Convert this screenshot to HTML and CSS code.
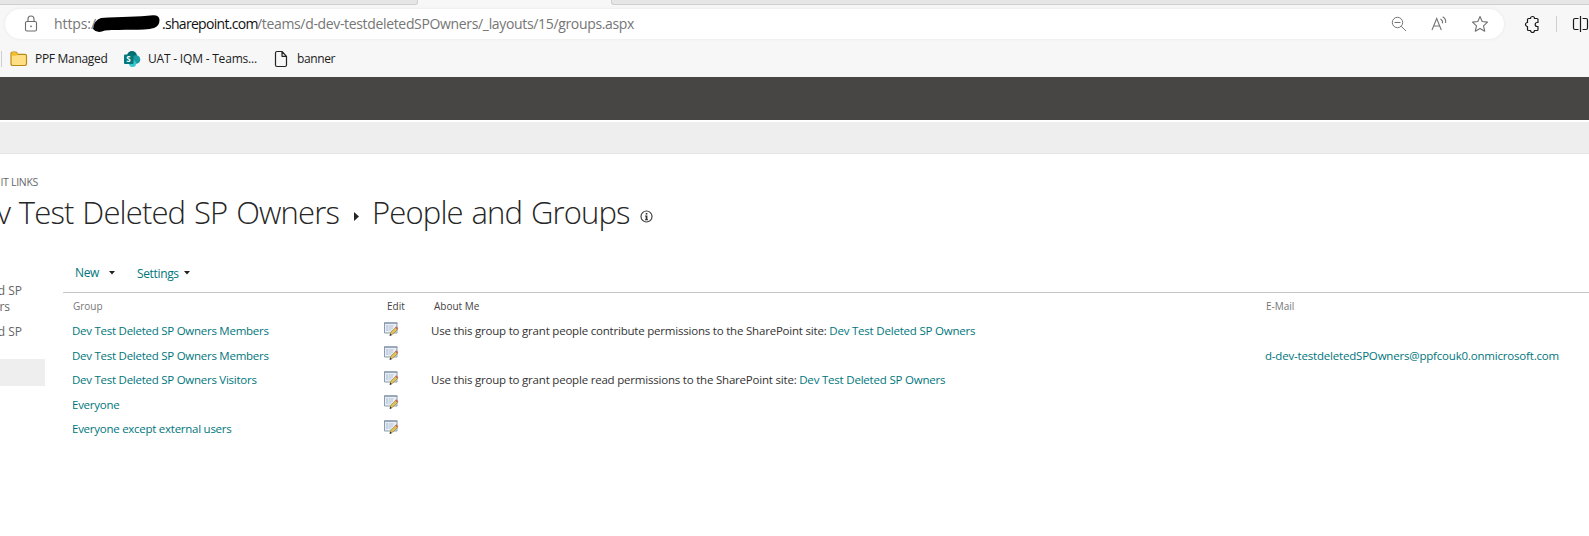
FILE: index.html
```html
<!DOCTYPE html>
<html lang="en">
<head>
<meta charset="utf-8">
<title>People and Groups</title>
<link rel="stylesheet" href="styles.css">
</head>
<body>
<svg class="defs" aria-hidden="true">
  <symbol id="edit" viewBox="0 0 16 15">
    <path d="M.5 1h12.500v10H.5z" fill="#e9eef6" stroke="#8b9bb0" stroke-width="1"/>
    <path d="M0 1h13.500" stroke="#8292a8" stroke-width="1.200"/>
    <path d="M2.500 4h1M2.500 6h1M2.500 8h1" stroke="#5f7ba8"/>
    <path d="M4.500 4h5M4.500 6h4.500M4.500 8h3" stroke="#b4c1d4"/>
    <path d="M6 13l1-3 4.500-4.500 2 2L9 12z" fill="#e0c352" stroke="#8d7a3a" stroke-width=".6"/>
    <path d="M11 5.500l1.400-1.200 1.900 1.900-1.300 1.300z" fill="#c9685a"/>
    <path d="M5.500 14l.8-2.200 1.600 1.500z" fill="#222"/>
  </symbol>
</svg>
<header class="browser">
  <div class="tabs"><div class="tab-left"></div><div class="tab-active"></div><div class="tab-right"></div></div>
  <div class="toolbar">
    <div class="address">
      <svg class="lock" width="14" height="18" viewBox="0 0 14 18" fill="none" stroke="#6b6b6b" stroke-width="1.100"><rect x="1.500" y="6.500" width="11" height="9.500" rx="1.500"/><path d="M4 6.500V4a3 3 0 0 1 6 0v2.500"/><circle cx="7" cy="11.300" r=".9" fill="#6b6b6b" stroke="none"/></svg>
      <span class="url scheme">https:/</span>
      <svg class="redaction" width="68" height="20" viewBox="0 0 68 20"><path d="M0 15Q1 6 8 4C28 2.500 45 3 60 1.200Q66.500 1 66.500 6Q66.500 12 61 14C50 17 30 15 12 16.500Q4 20 0 15z"/></svg>
      <span class="url domain">.sharepoint.com</span><span class="url path">/teams/d-dev-testdeletedSPOwners/_layouts/15/groups.aspx</span>
      <div class="address-actions">
        <svg width="16" height="16" viewBox="0 0 16 16" fill="none" stroke="#757575"><circle cx="6.500" cy="6.500" r="5.200"/><path d="M3.500 6.500h6M10.200 10.200l4.800 4.800"/></svg>
        <svg width="16" height="16" viewBox="0 0 16 16" fill="none" stroke="#757575" stroke-width="1.100"><path d="M1 14L5.700 2.500 10.300 14M2.600 10h6.200M9.500 3a4 4 0 0 1 2 4.300M11.700.8A6 6 0 0 1 14.600 7"/></svg>
        <svg width="18" height="18" viewBox="0 0 18 18" fill="none" stroke="#707070" stroke-width="1.100" stroke-linejoin="round"><path d="M9 1.500l2.200 5 5.300.6-4 3.700 1.200 5.400L9 13.600l-4.700 2.600 1.200-5.400-4-3.700 5.300-.6z"/></svg>
      </div>
    </div>
    <div class="extras">
      <svg width="16" height="18" viewBox="0 0 16 18" fill="none" stroke="#1a1a1a" stroke-width="1.200" stroke-linejoin="round"><path d="M4.500 3.500H6.500a2 2 0 0 1 4 0h2.500q1 0 1 1V7.500h-.8a1.800 1.800 0 0 0 0 4h.8v3q0 1-1 1h-2.500a2 2 0 0 1-4 0H4.500q-1 0-1-1v-3a2 2 0 0 1 0-4v-3q0-1 1-1z"/></svg>
      <i class="divider"></i>
      <svg width="18" height="18" viewBox="0 0 18 18" fill="none" stroke="#1a1a1a" stroke-width="1.200"><path d="M6.500 3.500H3q-1.500 0-1.500 1.500v8q0 1.500 1.500 1.500h3.500M10.500 3.500H14q1.500 0 1.500 1.500v8q0 1.500-1.500 1.500h-3.500M8.500 1v16"/></svg>
    </div>
  </div>
  <nav class="bookmarks">
    <i class="divider"></i>
    <svg class="folder" width="18" height="16" viewBox="0 0 18 16"><path d="M1 3q0-2 2-2h3l2 2.300h7q1.500 0 1.500 1.500v8q0 1.700-1.700 1.700H2.700Q1 14.500 1 12.800z" fill="#ffdf83" stroke="#b98a18" stroke-width="1.200"/><path d="M1.600 4.800h4.600L8 3.300 6 1.600H3Q1.600 1.600 1.600 3z" fill="#f4bd2c"/></svg>
    <span class="mark managed">PPF Managed</span>
    <svg class="sp" width="17" height="16" viewBox="0 0 17 16"><circle cx="8" cy="5" r="5" fill="#036c70"/><circle cx="12" cy="8.500" r="4.300" fill="#1a9ba1"/><circle cx="8.500" cy="12.500" r="3.500" fill="#37c6d0"/><rect y="3.500" width="9.500" height="9.500" rx="1" fill="#03787c"/><text class="sp-letter" x="2.300" y="11.300">S</text></svg>
    <span class="mark teams">UAT - IQM - Teams...</span>
    <svg class="page-icon" width="14" height="18" viewBox="0 0 14 18" fill="none" stroke="#222" stroke-width="1.200" stroke-linejoin="round"><path d="M1.500 3q0-1.500 1.500-1.500h5l4.500 4.800V15q0 1.500-1.500 1.500H3q-1.500 0-1.500-1.500zM8 1.500v4.800h4.500"/></svg>
    <span class="mark banner">banner</span>
  </nav>
</header>
<div class="suite"></div>
<div class="ribbon"></div>
<main class="page">
  <div class="edit-links"><span>IT LINKS</span></div>
  <h1 class="title"><span class="site">v Test Deleted SP Owners</span><svg class="crumb" width="5" height="9" viewBox="0 0 5 9"><path d="M0 0l5 4.500L0 9z" fill="#262626"/></svg><span class="section">People and Groups</span><svg class="info" width="13" height="13" viewBox="0 0 13 13"><circle cx="6.500" cy="6.500" r="5.500" fill="none" stroke="#444" stroke-width="1.200"/><path d="M5.700 3h1.700v1.500H5.700zM5 5.500h2.400v3.800H8v.9H5v-.9h.7V6.400H5z" fill="#333"/></svg></h1>
  <div class="columns">
    <aside class="side">
      <div class="side-a"><span>d SP</span></div>
      <div class="side-b"><span>rs</span></div>
      <div class="side-c"><span>d SP</span></div>
      <div class="selected"></div>
    </aside>
    <section class="list">
      <div class="menu"><a class="new">New</a><svg class="caret" width="6" height="4" viewBox="0 0 6 4"><path d="M0 0h6L3 3.500z" fill="#222"/></svg><a class="settings">Settings</a><svg class="caret2" width="6" height="4" viewBox="0 0 6 4"><path d="M0 0h6L3 3.500z" fill="#222"/></svg></div>
      <div class="row head"><span class="group">Group</span><span class="edit">Edit</span><span class="about">About Me</span><span class="mail">E-Mail</span></div>
      <div class="row"><a>Dev Test Deleted SP Owners Members</a><svg class="edit-icon"><use href="#edit"/></svg><p>Use this group to grant people contribute permissions to the SharePoint site: <a>Dev Test Deleted SP Owners</a></p></div>
      <div class="row"><a>Dev Test Deleted SP Owners Members</a><svg class="edit-icon"><use href="#edit"/></svg><p></p><a class="address-mail">d-dev-testdeletedSPOwners@ppfcouk0.onmicrosoft.com</a></div>
      <div class="row"><a>Dev Test Deleted SP Owners Visitors</a><svg class="edit-icon"><use href="#edit"/></svg><p>Use this group to grant people read permissions to the SharePoint site: <a>Dev Test Deleted SP Owners</a></p></div>
      <div class="row"><a>Everyone</a><svg class="edit-icon"><use href="#edit"/></svg></div>
      <div class="row"><a>Everyone except external users</a><svg class="edit-icon"><use href="#edit"/></svg></div>
    </section>
  </div>
</main>
</body>
</html>
```
FILE: styles.css
```css
* { box-sizing: border-box; }
body { margin: 0; height: 536px; overflow: hidden; background: #fff; color: #444; font: 12px/16px "Open Sans", "Noto Sans", sans-serif; }
svg { display: block; flex: none; }
.defs { position: absolute; width: 0; height: 0; }
span, a, p { white-space: nowrap; }
.browser { height: 77px; background: #f7f7f7; }
.tabs { display: flex; height: 5px; }
.tab-left, .tab-right { background: #e6e6e6; border-bottom: 1px solid #cfcfcf; }
.tab-left { width: 418px; border-right: 1px solid #cfcfcf; border-radius: 0 0 3px 0; }
.tab-active { width: 193px; }
.tab-right { flex: 1; border-left: 1px solid #cfcfcf; border-radius: 0 0 0 3px; }
.toolbar { display: flex; height: 38px; padding: 4px 0 4px 5px; overflow: hidden; }
.address { display: flex; flex: none; align-items: center; width: 1499px; height: 30px; padding-left: 19px; border-radius: 15px; background: #fff; box-shadow: 0 0 3px #e4e4e4; }
.url { font-size: 14px; line-height: 20px; color: #767676; }
.scheme { width: 39px; margin-left: 16px; letter-spacing: -.1px; }
.redaction { margin-right: 1px; }
.domain { color: #111; width: 95px; letter-spacing: -.7px; }
.path { letter-spacing: -.34px; }
.address-actions { display: flex; align-items: center; gap: 24px; margin-left: auto; padding-right: 15px; }
.extras { display: flex; flex: none; align-items: center; margin-left: 20px; }
.divider { width: 1px; height: 16px; background: #cfcfcf; flex: none; }
.extras .divider { margin: 0 15px 0 16px; }
.bookmarks { display: flex; align-items: center; height: 32px; padding-left: 1px; color: #1b1b1b; }
.folder { margin: 0 7px 0 8px; }
.managed { width: 89px; letter-spacing: -.3px; }
.sp-letter { fill: #fff; font: bold 8px "Open Sans", sans-serif; }
.teams { margin-left: 7px; width: 126px; letter-spacing: -.2px; }
.page-icon { margin-right: 9px; }
.banner { letter-spacing: -.4px; }
.suite { height: 43px; background: #484644; }
.ribbon { height: 34px; background: #eee; border-top: 2px solid #fff; border-bottom: 1px solid #e5e5e5; }
.page { padding-top: 20px; }
.edit-links { display: flex; justify-content: flex-end; width: 38px; height: 16px; font-size: 10.500px; color: #666; letter-spacing: -.3px; }
.title { display: flex; align-items: center; margin: 0; height: 46px; padding-bottom: 2px; font-size: 31px; line-height: 44px; font-weight: 300; letter-spacing: -.85px; word-spacing: 1.600px; color: #262626; }
.site { width: 339px; display: flex; justify-content: flex-end; }
.crumb { margin: 8px 13px 0 15px; }
.section { width: 268px; }
.info { margin-top: 9px; }
.columns { display: flex; }
.side { width: 63px; padding-top: 47px; color: #666; }
.side-a, .side-b, .side-c { display: flex; justify-content: flex-end; width: 22px; height: 16px; }
.side-b { width: 10px; }
.side-c { margin-top: 9px; }
.selected { width: 45px; height: 27px; margin-top: 19px; background: #eee; }
.list { flex: 1; padding-top: 10px; }
.menu { display: flex; align-items: center; height: 47px; padding: 8px 0 0 12px; border-bottom: 1px solid #c6c6c6; letter-spacing: -.35px; }
a { color: #00767c; }
.new { width: 34px; }
.settings { width: 47px; margin: 1px 0 0 22px; }
.row { display: grid; grid-template-columns: 312px 47px 834px 1fr; align-items: center; height: 24.500px; padding-left: 9px; color: #333; font-size: 11.500px; letter-spacing: -.26px; }
.row p { margin: 0; letter-spacing: -.205px; }
.address-mail { letter-spacing: -.19px; }
.head { height: 25.800px; font-size: 10px; color: #444; letter-spacing: 0; }
.edit { padding-left: 3px; }
.about { padding-left: 3px; }
.group, .mail { color: #777; padding: 1px 0 0 1px; }
.edit-icon { width: 16px; height: 15px; margin-bottom: 4px; }
```
